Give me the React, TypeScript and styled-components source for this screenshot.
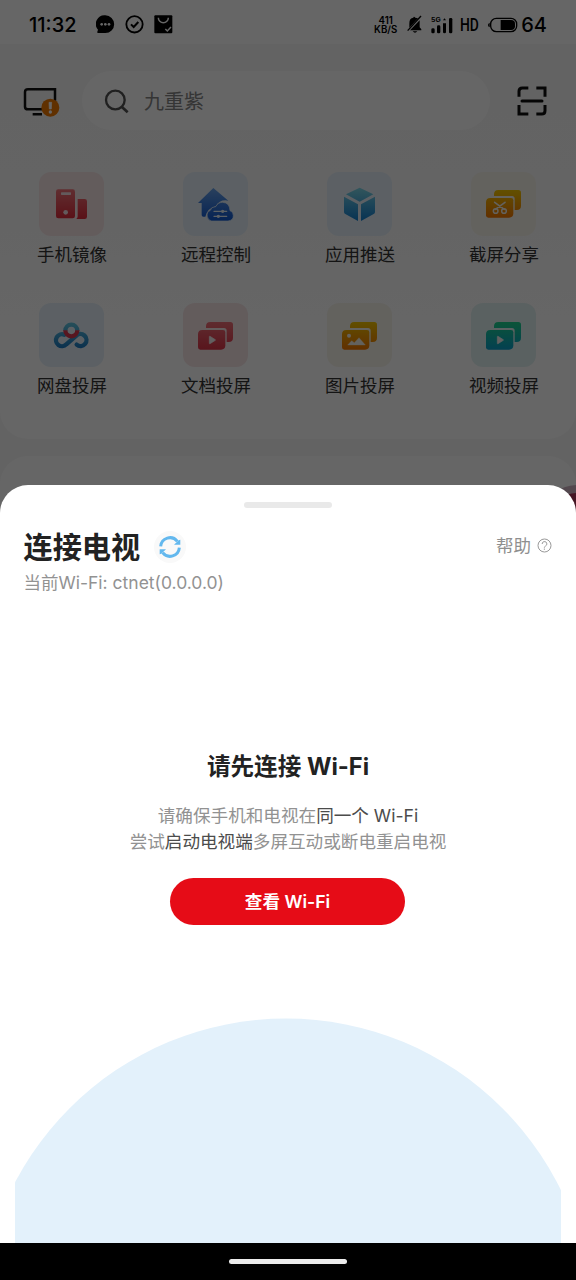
import React from "react";
import styled, { createGlobalStyle } from "styled-components";

const GlobalStyle = createGlobalStyle`
  * { box-sizing: border-box; }
  body {
    margin: 0;
    background: #000;
    font-family: Inter, "Noto Sans CJK SC", sans-serif;
    -webkit-font-smoothing: antialiased;
  }
`;

/* ---------- screen layers ---------- */

const Screen = styled.div`
  width: 576px;
  height: 1280px;
  display: grid;
  grid-template: 1243px 37px / 576px;
  overflow: hidden;
`;

const HomePage = styled.main`
  grid-area: 1 / 1;
  display: flex;
  flex-direction: column;
  background: #f8f8f8;
  position: relative;
`;

const Scrim = styled.div`
  grid-area: 1 / 1;
  background: rgba(0, 0, 0, 0.6);
  z-index: 1;
`;

const Sheet = styled.section`
  grid-area: 1 / 1;
  align-self: end;
  height: 758px;
  z-index: 2;
  display: flex;
  flex-direction: column;
  align-items: center;
  background: #fff;
  border-radius: 28px 28px 0 0;
  overflow: hidden;
`;

const NavBar = styled.footer`
  grid-area: 2 / 1;
  display: flex;
  justify-content: center;
  padding-top: 16px;
  background: #000;
`;

const NavHandle = styled.div`
  width: 118px;
  height: 5px;
  border-radius: 3px;
  background: #ececec;
`;

/* ---------- status bar ---------- */

const StatusBar = styled.header`
  height: 44px;
  flex: none;
  display: flex;
  align-items: center;
  justify-content: space-between;
  padding: 5px 29px 0 29px;
  background: #fff;
  color: #000;
`;

const StatusGroup = styled.div<{ $gap: number }>`
  display: flex;
  align-items: center;
  gap: ${(p) => p.$gap}px;
`;

const StatusText = styled.span<{ $after?: number }>`
  margin-right: ${(p) => p.$after ?? 0}px;
  font-size: 20px;
  line-height: 24px;
  font-weight: 500;
`;

const NetSpeed = styled.span`
  display: flex;
  flex-direction: column;
  align-items: center;
  margin-right: 2.5px;
  font-size: 9.7px;
  line-height: 9px;
  font-weight: 600;
`;

const HdText = styled.span`
  font-family: "Roboto", sans-serif;
  font-size: 18.5px;
  line-height: 24px;
  font-weight: 500;
  transform: scaleX(0.75);
  transform-origin: left center;
  width: 19px;
  margin-right: 2px;
`;

/* ---------- home page ---------- */

const TopCard = styled.section`
  height: 395px;
  flex: none;
  border-radius: 0 0 28px 28px;
  background: linear-gradient(#f7f7f7 0, #f9f9f9 130px, #fff 300px);
`;

const NextCard = styled.section`
  height: 300px;
  margin-top: 17px;
  border-radius: 28px;
  background: #fff;
`;

const FloatingBadge = styled.div`
  position: absolute;
  right: -34px;
  top: 485px;
  width: 66px;
  height: 60px;
  border-radius: 50%;
  border: 8px solid #d0b4c4;
  background: #b03a5c;
`;

const SearchRow = styled.div`
  display: flex;
  align-items: center;
  height: 59px;
  margin-top: 27px;
  padding: 0 28px 0 21.5px;
`;

const TvSlot = styled.div`
  padding-top: 4px;
  svg { display: block; }
`;

const SearchPill = styled.div`
  flex: none;
  display: flex;
  align-items: center;
  gap: 14px;
  width: 408px;
  height: 59px;
  margin: 0 26px 0 22.5px;
  padding-left: 22px;
  border-radius: 30px;
  background: #fff;
  color: #858585;
  font-size: 20px;
  line-height: 30px;
`;

const SearchText = styled.span`
  padding: 3px 0 0 1px;
`;

const FeatureGrid = styled.div`
  display: grid;
  grid-template-columns: repeat(4, 144px);
  grid-auto-rows: 131px;
  margin-top: 42px;
`;

const Feature = styled.div`
  display: flex;
  flex-direction: column;
  align-items: center;
`;

const FeatureTile = styled.div<{ $bg: string }>`
  width: 65px;
  height: 64px;
  margin-right: 1px;
  border-radius: 12px;
  background: ${(p) => p.$bg};
  svg { display: block; }
`;

const FeatureLabel = styled.span`
  margin-top: 6px;
  font-size: 17.5px;
  line-height: 26px;
  color: #333;
`;

/* ---------- sheet ---------- */

const Grabber = styled.div`
  flex: none;
  width: 88px;
  height: 6px;
  margin-top: 17px;
  border-radius: 3px;
  background: #e9e9e9;
`;

const SheetHeader = styled.div`
  width: 100%;
  display: flex;
  align-items: center;
  height: 44px;
  margin-top: 18px;
  padding: 0 24px 0 23.5px;
`;

const SheetTitle = styled.h1`
  margin: 0;
  font-size: 29.2px;
  line-height: 44px;
  font-weight: 700;
  color: #222;
`;

const RefreshButton = styled.div`
  width: 32px;
  height: 32px;
  margin: -3px 0 0 13.5px;
  border-radius: 50%;
  background: #f9f9f9;
  svg { display: block; }
`;

const HelpLink = styled.div`
  display: flex;
  align-items: center;
  gap: 6px;
  margin: -4px 0 0 auto;
  font-size: 17.5px;
  line-height: 26px;
  color: #8f8f8f;
  svg { margin-top: -2px; }
`;

const CurrentWifi = styled.div`
  align-self: flex-start;
  margin: 0 0 0 23.5px;
  font-size: 17.5px;
  line-height: 26px;
  letter-spacing: 0;
  color: #929292;
`;

const Prompt = styled.h2`
  margin: 154px 0 0;
  font-size: 23.6px;
  line-height: 34px;
  font-weight: 700;
  color: #222;
`;

const Hint = styled.p`
  margin: 19px 0 0;
  text-align: center;
  font-size: 17.6px;
  line-height: 26px;
  color: #929292;
`;

const Strong = styled.span`
  color: #4c4c4c;
`;

const WifiButton = styled.button`
  flex: none;
  width: 235px;
  height: 47px;
  margin: 23px 1px 0 0;
  padding: 0;
  border: 0;
  border-radius: 24px;
  background: #e60c17;
  color: #fff;
  font: 600 17.6px/46px Inter, "Noto Sans CJK SC", sans-serif;
`;

const Radar = styled.svg`
  display: block;
  flex: none;
  margin-top: auto;
`;

/* ---------- feature icons, drawn on a 195 x 192 tile ---------- */

type Stops = [string, string];

const Gradient = ({ id, stops }: { id: string; stops: Stops }) => (
  <linearGradient id={id} x1="0" y1="50" x2="0" y2="145" gradientUnits="userSpaceOnUse">
    <stop offset="0" stopColor={stops[0]} />
    <stop offset="1" stopColor={stops[1]} />
  </linearGradient>
);

const TileSvg = ({ children }: { children: React.ReactNode }) => (
  <svg width="65" height="64" viewBox="0 0 195 192">{children}</svg>
);

const MirrorIcon = () => (
  <TileSvg>
    <Gradient id="mirror" stops={["#f0747a", "#e02838"]} />
    <rect x="51" y="52" width="57" height="87" rx="7" fill="url(#mirror)" />
    <path d="M116 81h21a7 7 0 0 1 7 7v46a7 7 0 0 1-7 7h-25q4-3 4-8z" fill="url(#mirror)" />
    <rect x="66" y="61" width="30" height="8" rx="2" fill="#f8e2e5" />
    <circle cx="80" cy="121" r="7" fill="#f8e2e5" />
  </TileSvg>
);

const RemoteIcon = () => (
  <TileSvg>
    <Gradient id="remote" stops={["#659fe8", "#1058d0"]} />
    <path d="M91 48 136 86q-25-5-38 17-24 5-31 31h-6q-5 0-5-5V93H45z" fill="url(#remote)" />
    <path d="M86 147a17 17 0 0 1-4-32q3-11 16-11 7-13 21-13 21 1 22 25 10 3 10 15 0 14-16 16z" fill="url(#remote)" stroke="#e4f0fa" strokeWidth="2" />
    <path d="M93 118h38M93 133h38" stroke="#e4f0fa" strokeWidth="4" strokeLinecap="round" />
    <circle cx="119" cy="118" r="5" fill="#e4f0fa" />
    <circle cx="106" cy="133" r="5" fill="#e4f0fa" />
  </TileSvg>
);

const PushIcon = () => (
  <TileSvg>
    <Gradient id="push" stops={["#7ad4e6", "#1480d0"]} />
    <path d="M98 47 139 67 98 89 57 67zM51 74 93 97v50l-38-21q-4-2-4-6zM144 74v46q0 4-4 6l-38 21V97z" fill="url(#push)" />
  </TileSvg>
);

const StackedCards = ({ id, stops, dy = 0, children }: { id: string; stops: Stops; dy?: number; children: React.ReactNode }) => (
  <TileSvg>
    <Gradient id={id} stops={stops} />
    <g transform={`translate(0 ${dy})`}>
      <path d="M69 72v-5q0-13 13-13h60q8 0 8 8v39q0 13-13 13h-6V80q0-8-8-8z" fill={`url(#${id})`} />
      <path d="M58 78h62q7 0 7 7v39q0 13-13 13H52q-7 0-7-7V91q0-13 13-13z" fill={`url(#${id})`} />
      {children}
    </g>
  </TileSvg>
);

const CaptureIcon = () => (
  <StackedCards id="capture" stops={["#f6cc00", "#f47000"]}>
    <path d="m71 91 29 21M102 91l-29 21" stroke="#f7f4ea" strokeWidth="5" strokeLinecap="round" />
    <circle cx="74" cy="117" r="7" fill="none" stroke="#f7f4ea" strokeWidth="4.5" />
    <circle cx="99" cy="117" r="7" fill="none" stroke="#f7f4ea" strokeWidth="4.5" />
  </StackedCards>
);

const PlayMark = () => <path d="M79 98q0-2 2-1l16 10q2 1 0 2l-16 10q-2 1-2-1z" fill="#f4f1f1" stroke="#f4f1f1" strokeWidth="2" />;

const DocumentIcon = () => (
  <StackedCards id="document" stops={["#ee7078", "#dc3044"]} dy={3}><PlayMark /></StackedCards>
);

const VideoIcon = () => (
  <StackedCards id="video" stops={["#1cd58a", "#089cd0"]} dy={3}><PlayMark /></StackedCards>
);

const PictureIcon = () => (
  <StackedCards id="picture" stops={["#f2c800", "#f27000"]} dy={3}>
    <circle cx="66" cy="95" r="6" fill="#f7f4ea" />
    <path d="m62 123 12-13 8 6 14-15 19 22z" fill="#f7f4ea" stroke="#f7f4ea" strokeLinejoin="round" />
  </StackedCards>
);

const CloudDiskIcon = () => (
  <TileSvg>
    <Gradient id="disk" stops={["#68cce2", "#1270be"]} />
    <g fill="none" strokeWidth="13">
      <path d="M113 125A18 18 0 1 0 111 99L82 124A18 18 0 1 1 76 95" stroke="url(#disk)" strokeLinecap="round" />
      <path d="M79 83a18 18 0 0 1 36 0" stroke="url(#disk)" />
      <path d="M79 82a18 18 0 1 0 36 0" stroke="#d93850" />
    </g>
  </TileSvg>
);

const features = [
  { label: "手机镜像", bg: "#f8e5e7", Icon: MirrorIcon },
  { label: "远程控制", bg: "#e5f1fa", Icon: RemoteIcon },
  { label: "应用推送", bg: "#e5f1fa", Icon: PushIcon },
  { label: "截屏分享", bg: "#f8f5ec", Icon: CaptureIcon },
  { label: "网盘投屏", bg: "#e5f1fa", Icon: CloudDiskIcon },
  { label: "文档投屏", bg: "#f8e5e7", Icon: DocumentIcon },
  { label: "图片投屏", bg: "#f8f5ec", Icon: PictureIcon },
  { label: "视频投屏", bg: "#e2f2f2", Icon: VideoIcon },
];

/* ---------- small icons ---------- */

const ChatIcon = () => (
  <svg width="19" height="19" viewBox="0 0 57 57">
    <path d="M28 1a26 26 0 1 1 0 53H6q-3 0-2-4l2-6A26 26 0 0 1 28 1z" />
    <g fill="#fff"><circle cx="17" cy="28" r="4" /><circle cx="28" cy="28" r="4" /><circle cx="39" cy="28" r="4" /></g>
  </svg>
);

const CheckIcon = () => (
  <svg width="19" height="19" viewBox="0 0 57 57" fill="none" stroke="#000">
    <circle cx="28.5" cy="28" r="24.5" strokeWidth="5.5" />
    <path d="m18 28 8 8 14-15" strokeWidth="6" />
  </svg>
);

const BagIcon = () => (
  <svg width="19" height="19" viewBox="0 0 57 57">
    <rect x="1" y="1" width="54" height="54" rx="3" />
    <path d="M13 8a15 15 0 0 0 30 0M34 42l6 6 11-12" fill="none" stroke="#fff" strokeWidth="4.5" />
  </svg>
);

const MutedBell = styled.svg`
  margin-right: 2.5px;
`;

const MutedBellIcon = () => (
  <MutedBell width="15" height="19" viewBox="0 0 45 57">
    <path d="M7 38V25Q7 9 19 8q1-5 6 0l8 2zM12 43 38 16v21l5 6v3H9zM17 49h14q-7 8-14 0z" />
    <path d="M2 47 42 3" stroke="#000" strokeWidth="4" />
  </MutedBell>
);

const SignalText = styled.text`
  font: 700 19px Inter, sans-serif;
`;

const SignalIcon = () => (
  <svg width="22" height="18" viewBox="0 0 66 54">
    <SignalText x="0" y="17" textLength="29" lengthAdjust="spacingAndGlyphs">5G</SignalText>
    <rect x="1" y="37" width="10" height="15" rx="4" />
    <rect x="18" y="28" width="10" height="24" rx="4" />
    <path d="M36 22h9v26q0 4-4.500 4T36 48zM36 13l4.500-6 4.500 6z" />
    <rect x="54" y="6" width="10" height="46" rx="4" />
  </svg>
);

const Battery = styled.svg`
  margin-right: -4px;
`;

const BatteryIcon = () => (
  <Battery width="30" height="16" viewBox="0 0 90 48">
    <rect x="8" y="4" width="78" height="40" rx="17" fill="none" stroke="#000" strokeWidth="4" />
    <path d="M5 17v14q-5-2-5-7t5-7z" />
    <path d="M38 9h31q12 0 12 11v8q0 11-12 11H38z" />
  </Battery>
);

const TvIcon = () => (
  <svg width="38" height="32" viewBox="0 0 114 96">
    <path d="M99 41V7H18Q9 7 9 15v44q0 8 9 8h44M32 82h28" fill="none" stroke="#111" strokeWidth="7.5" />
    <circle cx="85" cy="62" r="27" fill="#f07800" />
    <path d="M81 46h8l-1 20h-6z" fill="#fff" stroke="#fff" strokeWidth="2" />
    <circle cx="85" cy="75" r="5" fill="#fff" />
  </svg>
);

const SearchIcon = () => (
  <svg width="25" height="26" viewBox="0 0 75 78" fill="none" stroke="#505050" strokeWidth="7">
    <circle cx="34" cy="36" r="28" />
    <path d="m53 56 18 17" strokeWidth="8" />
  </svg>
);

const ScanIcon = () => (
  <svg width="32" height="32" viewBox="0 0 96 96" fill="none" stroke="#111" strokeWidth="9">
    <path d="M9 35V19Q9 9 19 9h18M61 9h26v26M9 60v27h28M61 87h16q10 0 10-10V60" />
    <path d="M18 48h60" strokeLinecap="round" />
  </svg>
);

const RefreshIcon = () => (
  <svg width="32" height="32" viewBox="0 0 96 96">
    <g id="refresh-arc">
      <path d="M20 46A28 28 0 0 1 70 31" fill="none" stroke="#63b8ee" strokeWidth="9" />
      <path d="M74 28l5-2v15H60z" fill="#63b8ee" />
    </g>
    <use href="#refresh-arc" transform="rotate(180 48 48)" />
  </svg>
);

const HelpIcon = () => (
  <svg width="15" height="15" viewBox="0 0 45 45" fill="none" stroke="#989898" strokeWidth="3">
    <circle cx="22.5" cy="22.5" r="19.5" />
    <path d="M15.5 18a7 7 0 1 1 10 6q-3.500 2-3.500 5" />
    <path d="M22 31.500v4" />
  </svg>
);

export default function App() {
  return (
    <>
      <GlobalStyle />
      <Screen>
        <HomePage>
          <StatusBar>
            <StatusGroup $gap={10}>
              <StatusText $after={9}>11:32</StatusText>
              <ChatIcon />
              <CheckIcon />
              <BagIcon />
            </StatusGroup>
            <StatusGroup $gap={7}>
              <NetSpeed><span>411</span><span>KB/S</span></NetSpeed>
              <MutedBellIcon />
              <SignalIcon />
              <HdText>HD</HdText>
              <BatteryIcon />
              <StatusText>64</StatusText>
            </StatusGroup>
          </StatusBar>
          <TopCard>
            <SearchRow>
              <TvSlot><TvIcon /></TvSlot>
              <SearchPill>
                <SearchIcon />
                <SearchText>九重紫</SearchText>
              </SearchPill>
              <ScanIcon />
            </SearchRow>
            <FeatureGrid>
              {features.map(({ label, bg, Icon }) => (
                <Feature key={label}>
                  <FeatureTile $bg={bg}><Icon /></FeatureTile>
                  <FeatureLabel>{label}</FeatureLabel>
                </Feature>
              ))}
            </FeatureGrid>
          </TopCard>
          <NextCard />
          <FloatingBadge />
        </HomePage>
        <Scrim />
        <Sheet>
          <Grabber />
          <SheetHeader>
            <SheetTitle>连接电视</SheetTitle>
            <RefreshButton><RefreshIcon /></RefreshButton>
            <HelpLink>帮助<HelpIcon /></HelpLink>
          </SheetHeader>
          <CurrentWifi>当前Wi-Fi: ctnet(0.0.0.0)</CurrentWifi>
          <Prompt>请先连接 Wi-Fi</Prompt>
          <Hint>
            请确保手机和电视在<Strong>同一个 Wi-Fi</Strong>
            <br />
            尝试<Strong>启动电视端</Strong>多屏互动或断电重启电视
          </Hint>
          <WifiButton>查看 Wi-Fi</WifiButton>
          <Radar width="546" height="225" viewBox="0 0 546 225">
            <circle cx="271" cy="306.5" r="306" fill="#e3f1fb" />
          </Radar>
        </Sheet>
        <NavBar><NavHandle /></NavBar>
      </Screen>
    </>
  );
}
